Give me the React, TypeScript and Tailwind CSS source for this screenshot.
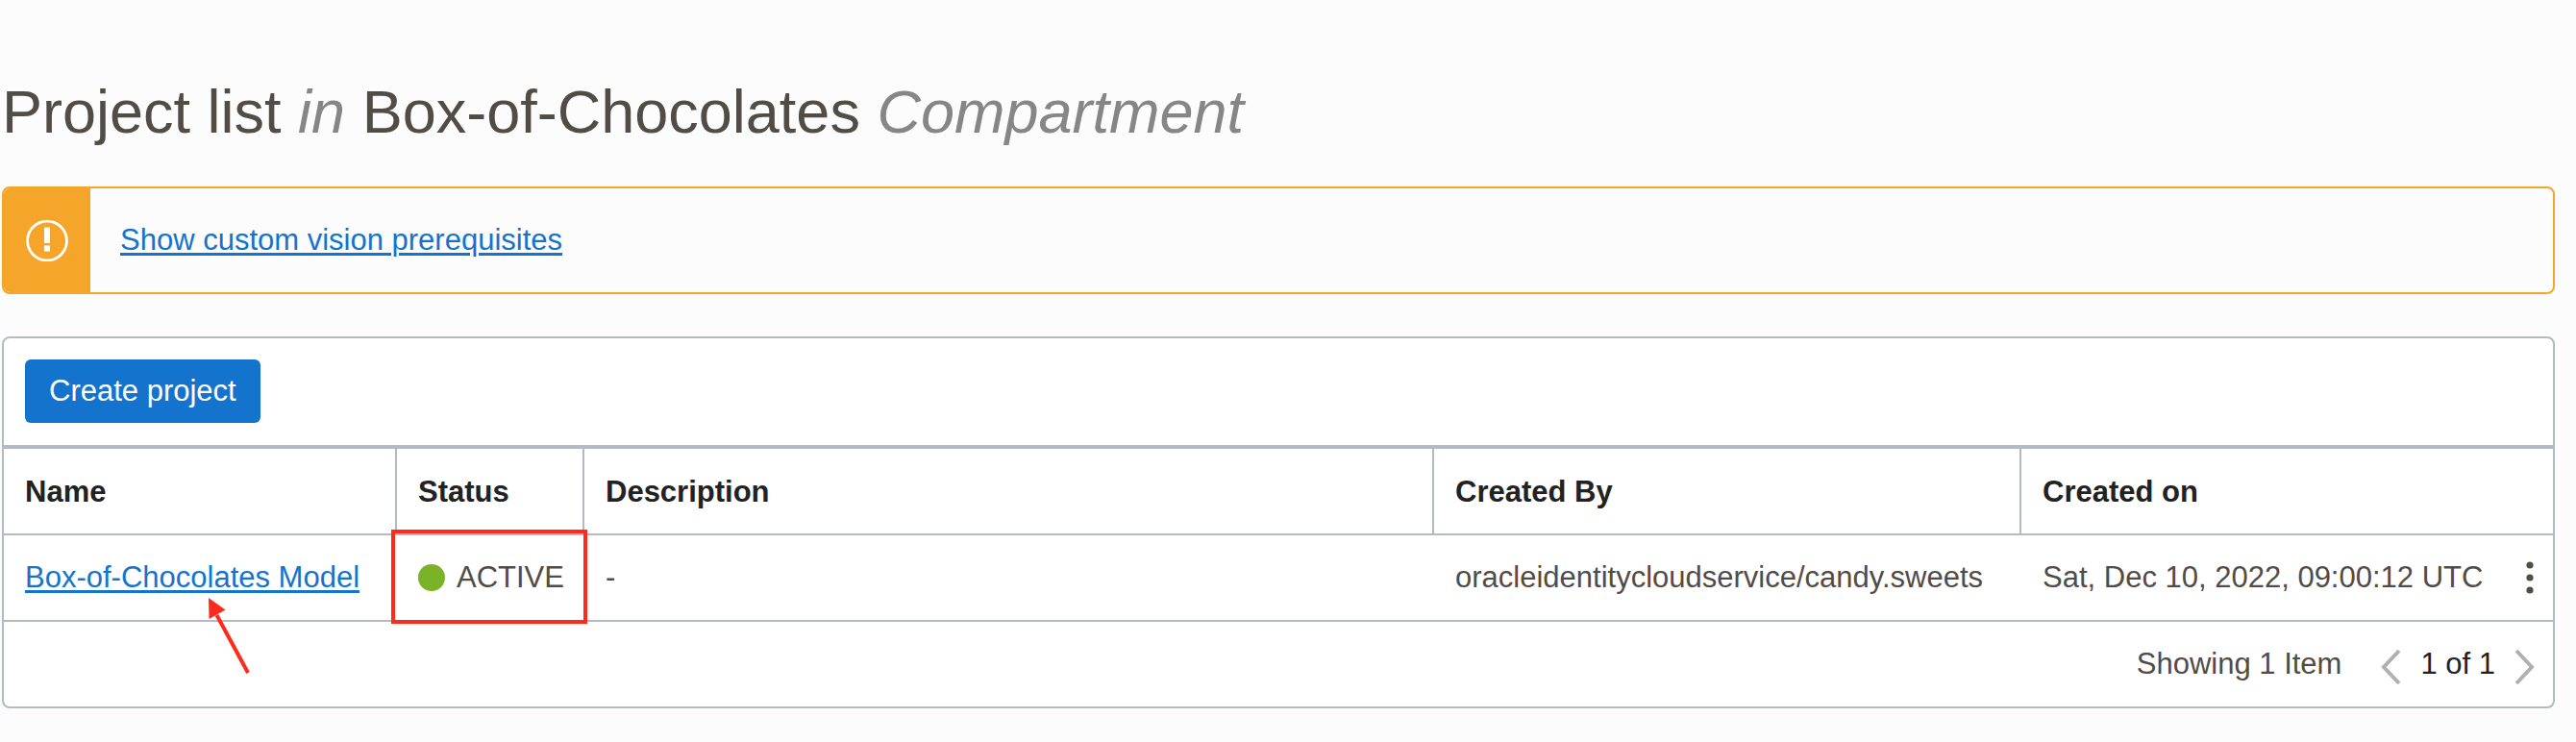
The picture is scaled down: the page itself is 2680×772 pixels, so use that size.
const columns = [
  { label: 'Name', width: 'w-[409px]' },
  { label: 'Status', width: 'w-[195px]' },
  { label: 'Description', width: '' },
  { label: 'Created By', width: 'w-[611px]' },
  { label: 'Created on', width: 'w-[553px]' },
];

const linkClass =
  'text-[#1474cd] underline decoration-[3px] underline-offset-[3px]';

function WarningIcon() {
  return (
    <svg width="44" height="44" viewBox="0 0 44 44" fill="none" aria-hidden="true">
      <circle cx="22" cy="22.5" r="20.4" stroke="white" strokeWidth="2.8" />
      <rect x="19" y="8.5" width="6" height="16.5" fill="white" />
      <rect x="19" y="27.5" width="6" height="6" fill="white" />
    </svg>
  );
}

function PointerArrow() {
  return (
    <svg
      className="pointer-events-none absolute top-[58px] left-[206px] z-10"
      width="60"
      height="90"
      viewBox="0 0 60 90"
      aria-hidden="true"
    >
      <path d="M48 85 L15.5 25" stroke="#fe2a1c" strokeWidth="4" />
      <path d="M7 7 L24.5 19.5 L7.5 29 Z" fill="#fe2a1c" />
    </svg>
  );
}

function Chevron({ d }: { d: string }) {
  return (
    <svg width="22" height="38" viewBox="0 0 22 38" fill="none" aria-hidden="true">
      <path d={d} stroke="#b0b0b0" strokeWidth="4" />
    </svg>
  );
}

function Banner() {
  return (
    <section className="flex h-28 overflow-hidden rounded-lg border-2 border-[#f5a62a]">
      <div className="flex w-[90px] items-center justify-center bg-[#f5a62a]">
        <WarningIcon />
      </div>
      <div className="flex items-center pl-[31px]">
        <a href="#prerequisites" className={linkClass}>
          Show custom vision prerequisites
        </a>
      </div>
    </section>
  );
}

function ProjectTable() {
  return (
    <table className="w-full table-fixed border-separate border-spacing-0 border-t-4 border-[#b4bac4] text-left">
      <colgroup>
        {columns.map((c) => (
          <col key={c.label} className={c.width} />
        ))}
      </colgroup>
      <thead>
        <tr className="h-[90px]">
          {columns.map((c) => (
            <th
              key={c.label}
              scope="col"
              className="border-r-2 border-b-2 border-[#b4bac4] px-[22px] pt-0.5 font-bold text-[#222] last:border-r-0"
            >
              {c.label}
            </th>
          ))}
        </tr>
      </thead>
      <tbody>
        <tr className="h-[90px] *:border-b-2 *:border-[#b4bac4] *:px-[22px] *:whitespace-nowrap">
          <td className="relative">
            <a href="#model" className={linkClass}>
              Box-of-Chocolates Model
            </a>
            <PointerArrow />
          </td>
          <td className="relative">
            <div className="flex items-center gap-3">
              <span className="size-7 shrink-0 rounded-full bg-[#7ab228]" />
              ACTIVE
            </div>
            <div className="pointer-events-none absolute -top-1.5 -right-[3px] -bottom-1 -left-1.5 border-4 border-[#fe2a1c]" />
          </td>
          <td>-</td>
          <td>oracleidentitycloudservice/candy.sweets</td>
          <td>
            <div className="-mr-0.5 flex items-center justify-between">
              Sat, Dec 10, 2022, 09:00:12 UTC
              <button type="button" aria-label="Actions">
                <svg width="8" height="36" viewBox="0 0 8 36" fill="#524c47" aria-hidden="true">
                  <circle cx="4" cy="5" r="3.6" />
                  <circle cx="4" cy="18" r="3.6" />
                  <circle cx="4" cy="31" r="3.6" />
                </svg>
              </button>
            </div>
          </td>
        </tr>
      </tbody>
    </table>
  );
}

function Pagination() {
  return (
    <footer className="flex h-[88px] items-center justify-end pr-[18px]">
      <span>Showing 1 Item</span>
      <nav aria-label="Pagination" className="ml-10 flex items-center gap-5">
        <button type="button" aria-label="Previous page" className="pt-1.5">
          <Chevron d="M20 2 L4 19 L20 36" />
        </button>
        <span className="text-[#222]">1 of 1</span>
        <button type="button" aria-label="Next page" className="pt-1.5">
          <Chevron d="M2 2 L18 19 L2 36" />
        </button>
      </nav>
    </footer>
  );
}

export default function App() {
  return (
    <main className="min-h-screen bg-[#fcfcfc] pt-20 pr-[22px] pb-9 pl-0.5 font-['Liberation_Sans',Arial,sans-serif] text-[31px] leading-9 text-[#524c47]">
      <h1 className="mb-[42px] text-[63px] leading-[72px]">
        Project list <em className="text-[#868686]">in</em> Box-of-Chocolates{' '}
        <em className="text-[#868686]">Compartment</em>
      </h1>
      <Banner />
      <section className="mt-11 rounded-lg border-2 border-[#b4bac4] bg-white">
        <div className="px-[22px] pt-[22px] pb-[23px]">
          <button
            type="button"
            className="h-[66px] rounded-md bg-[#1474cd] px-[25px] text-white"
          >
            Create project
          </button>
        </div>
        <ProjectTable />
        <Pagination />
      </section>
    </main>
  );
}
